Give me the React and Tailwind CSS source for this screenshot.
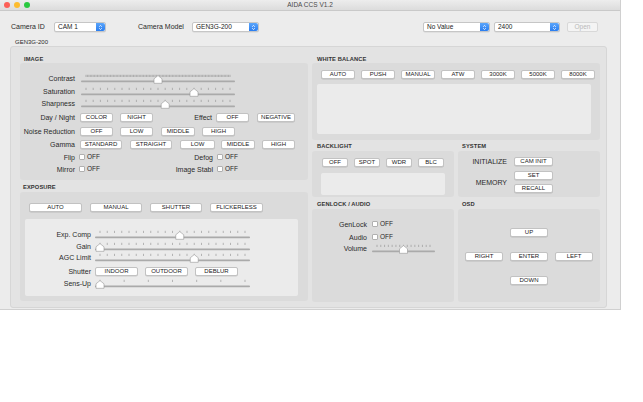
import React from 'react';

const Btn = ({ w, className = '', children }) => (
  <div className={`${w} ${className} h-[9px] shrink-0 rounded-[2px] border border-[#c2c2c2] bg-white text-center text-[6px] leading-[7px] text-[#222] shadow-[0_0.5px_0_rgba(0,0,0,0.14)]`}>
    {children}
  </div>
);

const Label = ({ w, children }) => (
  <div className={`${w} shrink-0 text-right text-[7px] leading-[9px] text-[#2a2a2a]`}>{children}</div>
);

const Check = ({ className = '' }) => (
  <div className={`${className} flex items-center`}>
    <div className="h-[6px] w-[6px] rounded-[1px] border border-[#b0b0b0] bg-white" />
    <span className="ml-[2px] text-[6.5px] text-[#2a2a2a]">OFF</span>
  </div>
);

const Title = ({ className = '', children }) => (
  <div className={`${className} shrink-0 text-[5.75px] font-bold tracking-[0.1px] text-[#333]`}>{children}</div>
);

function Slider({ w, ticks, value, className = '' }) {
  const r = 5;
  const xs = Array.from({ length: ticks }, (_, i) => r + (i * (w - 2 * r)) / (ticks - 1));
  const cx = r + value * (w - 2 * r);
  return (
    <svg width={w} height={11} className={`${className} block shrink-0`}>
      {xs.map((x, i) => (
        <line key={i} x1={x} x2={x} y1={1.8} y2={4} stroke="#8e8e8e" strokeWidth={0.6} />
      ))}
      <rect x={0} y={7.6} width={w} height={1.6} rx={0.8} fill="#aaaaaa" />
      <path
        d={`M${cx - 4} 10.3 V5.8 L${cx} 2.6 L${cx + 4} 5.8 V10.3 Z`}
        fill="#fff"
        stroke="#969696"
        strokeWidth={0.6}
        strokeLinejoin="round"
      />
    </svg>
  );
}

const Select = ({ w, className = '', children }) => (
  <div className={`${w} ${className} flex h-[10px] shrink-0 rounded-[2px] border border-[#c6c6c6] bg-white shadow-[0_0.5px_0_rgba(0,0,0,0.1)]`}>
    <div className="flex-1 pl-[3px] text-[6.5px] leading-[8px] text-[#222]">{children}</div>
    <div className="flex h-full w-[9px] items-center justify-center rounded-r-[2px] bg-gradient-to-b from-[#5aa5fb] to-[#2a7ef0]">
      <svg width="5" height="7" viewBox="0 0 5 7">
        <path d="M1.2 2.8 L2.5 1.4 L3.8 2.8 M1.2 4.2 L2.5 5.6 L3.8 4.2" fill="none" stroke="#fff" strokeWidth="0.8" />
      </svg>
    </div>
  </div>
);

function ImagePanel() {
  return (
    <div className="flex h-[117px] flex-col rounded-[3px] bg-[#dbdbdb] pt-[10px]">
      <div className="flex h-[11px] items-center">
        <Label w="w-[55px]">Contrast</Label>
        <Slider className="ml-[6px]" w={154} ticks={101} value={0.5} />
      </div>
      <div className="mt-[2px] flex h-[11px] items-center">
        <Label w="w-[55px]">Saturation</Label>
        <Slider className="ml-[6px]" w={154} ticks={21} value={0.75} />
      </div>
      <div className="mt-[1px] flex h-[11px] items-center">
        <Label w="w-[55px]">Sharpness</Label>
        <Slider className="ml-[6px]" w={154} ticks={21} value={0.55} />
      </div>
      <div className="mt-[4px] flex h-[9px] items-center">
        <Label w="w-[55px]">Day / Night</Label>
        <Btn w="w-[33px]" className="ml-[5px]">COLOR</Btn>
        <Btn w="w-[33px]" className="ml-[7px]">NIGHT</Btn>
        <Label w="w-[59px]">Effect</Label>
        <Btn w="w-[33px]" className="ml-[4px]">OFF</Btn>
        <Btn w="w-[38px]" className="ml-[8px]">NEGATIVE</Btn>
      </div>
      <div className="mt-[5px] flex h-[9px] items-center">
        <Label w="w-[55px]">Noise Reduction</Label>
        <Btn w="w-[33px]" className="ml-[5px]">OFF</Btn>
        <Btn w="w-[33px]" className="ml-[7px]">LOW</Btn>
        <Btn w="w-[34px]" className="ml-[8px]">MIDDLE</Btn>
        <Btn w="w-[33px]" className="ml-[7px]">HIGH</Btn>
      </div>
      <div className="mt-[4px] flex h-[9px] items-center">
        <Label w="w-[55px]">Gamma</Label>
        <Btn w="w-[42px]" className="ml-[5px]">STANDARD</Btn>
        <Btn w="w-[42px]" className="ml-[8px]">STRAIGHT</Btn>
        <Btn w="w-[35px]" className="ml-[8px]">LOW</Btn>
        <Btn w="w-[34px]" className="ml-[6px]">MIDDLE</Btn>
        <Btn w="w-[33px]" className="ml-[7px]">HIGH</Btn>
      </div>
      <div className="mt-[3px] flex h-[10px] items-center">
        <div className="flex w-[138px] items-center">
          <Label w="w-[55px]">Flip</Label>
          <Check className="ml-[4px]" />
        </div>
        <Label w="w-[55px]">Defog</Label>
        <Check className="ml-[4px]" />
      </div>
      <div className="mt-[2px] flex h-[10px] items-center">
        <div className="flex w-[138px] items-center">
          <Label w="w-[55px]">Mirror</Label>
          <Check className="ml-[4px]" />
        </div>
        <Label w="w-[55px]">Image Stabl</Label>
        <Check className="ml-[4px]" />
      </div>
    </div>
  );
}

function ExposurePanel() {
  return (
    <div className="flex h-[109px] flex-col rounded-[3px] bg-[#dbdbdb] pl-[5px] pt-[11px]">
      <div className="ml-[4px] flex h-[9px]">
        <Btn w="w-[53px]">AUTO</Btn>
        <Btn w="w-[52px]" className="ml-[8px]">MANUAL</Btn>
        <Btn w="w-[52px]" className="ml-[8px]">SHUTTER</Btn>
        <Btn w="w-[53px]" className="ml-[8px]">FLICKERLESS</Btn>
      </div>
      <div className="mt-[7px] flex h-[77px] w-[273px] flex-col rounded-[2px] bg-[#ebebeb] pt-[10px]">
        <div className="flex h-[11px] items-center">
          <Label w="w-[66px]">Exp. Comp</Label>
          <Slider className="ml-[4px]" w={155} ticks={21} value={0.55} />
        </div>
        <div className="mt-[1px] flex h-[11px] items-center">
          <Label w="w-[66px]">Gain</Label>
          <Slider className="ml-[4px]" w={155} ticks={21} value={0} />
        </div>
        <div className="flex h-[11px] items-center">
          <Label w="w-[66px]">AGC Limit</Label>
          <Slider className="ml-[4px]" w={155} ticks={21} value={0.65} />
        </div>
        <div className="mt-[4px] flex h-[9px] items-center">
          <Label w="w-[66px]">Shutter</Label>
          <Btn w="w-[43px]" className="ml-[4px]">INDOOR</Btn>
          <Btn w="w-[43px]" className="ml-[7px]">OUTDOOR</Btn>
          <Btn w="w-[43px]" className="ml-[7px]">DEBLUR</Btn>
        </div>
        <div className="mt-[2px] flex h-[11px] items-center">
          <Label w="w-[66px]">Sens-Up</Label>
          <Slider className="ml-[4px]" w={155} ticks={7} value={0} />
        </div>
      </div>
    </div>
  );
}

function RightColumn() {
  return (
    <div className="flex w-[288px] flex-col pt-[9px]">
      <Title className="h-[7px] pl-[5px] leading-[7px]">WHITE BALANCE</Title>
      <div className="flex h-[77px] flex-col rounded-[3px] bg-[#dbdbdb] pl-[5px] pt-[7px]">
        <div className="ml-[4px] flex h-[9px] gap-[6px]">
          {['AUTO', 'PUSH', 'MANUAL', 'ATW', '3000K', '5000K', '8000K'].map((t) => (
            <Btn key={t} w="w-[34px]">{t}</Btn>
          ))}
        </div>
        <div className="mt-[5px] h-[50px] w-[274px] rounded-[2px] bg-[#ebebeb]" />
      </div>

      <div className="mt-[3px] flex gap-[4px]">
        <div className="flex w-[142px] flex-col">
          <Title className="h-[8px] pl-[5px] leading-[7px]">BACKLIGHT</Title>
          <div className="flex h-[46px] flex-col rounded-[3px] bg-[#dbdbdb] pl-[9px] pt-[7px]">
            <div className="ml-[1px] flex h-[9px] gap-[6px]">
              {['OFF', 'SPOT', 'WDR', 'BLC'].map((t) => (
                <Btn key={t} w="w-[26px]">{t}</Btn>
              ))}
            </div>
            <div className="mt-[6px] h-[22px] w-[124px] rounded-[2px] bg-[#ebebeb]" />
          </div>
        </div>
        <div className="flex w-[142px] flex-col">
          <Title className="h-[8px] pl-[4px] leading-[7px]">SYSTEM</Title>
          <div className="flex h-[46px] flex-col rounded-[3px] bg-[#dbdbdb] pt-[6px]">
            <div className="flex h-[9px] items-center">
              <Label w="w-[49px]">INITIALIZE</Label>
              <Btn w="w-[39px]" className="ml-[7px]">CAM INIT</Btn>
            </div>
            <div className="mt-[5px] flex items-center">
              <Label w="w-[49px]">MEMORY</Label>
              <div className="ml-[7px] flex flex-col">
                <Btn w="w-[39px]">SET</Btn>
                <Btn w="w-[39px]" className="mt-[4px]">RECALL</Btn>
              </div>
            </div>
          </div>
        </div>
      </div>

      <div className="mt-[4px] flex gap-[4px]">
        <div className="flex w-[142px] flex-col">
          <Title className="h-[8px] pl-[5px] leading-[7px]">GENLOCK / AUDIO</Title>
          <div className="flex h-[93px] flex-col rounded-[3px] bg-[#dbdbdb] pt-[10px]">
            <div className="flex h-[10px] items-center">
              <Label w="w-[55px]">GenLock</Label>
              <Check className="ml-[5px]" />
            </div>
            <div className="mt-[3px] flex h-[10px] items-center">
              <Label w="w-[55px]">Audio</Label>
              <Check className="ml-[5px]" />
            </div>
            <div className="mt-[1px] flex h-[11px] items-center">
              <Label w="w-[55px]">Volume</Label>
              <Slider className="ml-[5px]" w={63} ticks={15} value={0.5} />
            </div>
          </div>
        </div>
        <div className="flex w-[142px] flex-col">
          <Title className="h-[8px] pl-[4px] leading-[7px]">OSD</Title>
          <div className="flex h-[93px] flex-col rounded-[3px] bg-[#dbdbdb] pl-[7px] pt-[19px]">
            <Btn w="w-[38px]" className="ml-[45px]">UP</Btn>
            <div className="mt-[15px] flex gap-[7px]">
              <Btn w="w-[38px]">RIGHT</Btn>
              <Btn w="w-[38px]">ENTER</Btn>
              <Btn w="w-[38px]">LEFT</Btn>
            </div>
            <Btn w="w-[38px]" className="ml-[45px] mt-[15px]">DOWN</Btn>
          </div>
        </div>
      </div>
    </div>
  );
}

export default function App() {
  return (
    <div className="h-[402px] w-[643px] overflow-hidden bg-white font-['Liberation_Sans','Arial',sans-serif]">
      <div className="flex h-[310px] w-[621px] flex-col border-r border-b border-[#d0d0d0] bg-[#ececec]">
        {/* title bar */}
        <div className="flex h-[11px] shrink-0 items-center border-b border-[#c9c9c9] bg-gradient-to-b from-[#ededed] to-[#dcdcdc]">
          <div className="flex w-[40px] items-center gap-[4px] pl-[4px]">
            <div className="h-[6px] w-[6px] rounded-full bg-[#fc5f57]" />
            <div className="h-[6px] w-[6px] rounded-full bg-[#fdbc2e]" />
            <div className="h-[6px] w-[6px] rounded-full bg-[#2ac840]" />
          </div>
          <div className="flex-1 text-center text-[6.5px] leading-[10px] text-[#4a4a4a]">AIDA CCS V1.2</div>
          <div className="w-[40px]" />
        </div>

        {/* camera row */}
        <div className="mt-[11px] flex h-[10px] items-center pl-[11px] text-[7px] text-[#2a2a2a]">
          <div className="w-[43px] shrink-0">Camera ID</div>
          <Select w="w-[52px]">CAM 1</Select>
          <div className="ml-[32px] w-[54px] shrink-0">Camera Model</div>
          <Select w="w-[67px]">GEN3G-200</Select>
          <Select w="w-[67px]" className="ml-[164px]">No Value</Select>
          <Select w="w-[66px]" className="ml-[4px]">2400</Select>
          <div className="ml-[7px] h-[10px] w-[31px] shrink-0 rounded-[2px] border border-[#d8d8d8] bg-[#f4f4f4] text-center text-[6.5px] leading-[8px] text-[#b9b9b9]">
            Open
          </div>
        </div>

        <div className="mt-[7px] h-[6px] pl-[15px] text-[6px] leading-[6px] text-[#2a2a2a]">GEN3G-200</div>

        {/* group box */}
        <div className="ml-[10px] mt-[1px] flex h-[262px] w-[597px] gap-[4px] rounded-[3px] border border-[#d6d6d6] bg-[#e3e3e3] pl-[9px] pr-[6px]">
          <div className="flex w-[288px] flex-col pt-[9px]">
            <Title className="h-[7px] pl-[4px] leading-[7px]">IMAGE</Title>
            <ImagePanel />
            <Title className="mt-[4px] h-[8px] pl-[3px] leading-[7px]">EXPOSURE</Title>
            <ExposurePanel />
          </div>
          <RightColumn />
        </div>
      </div>
    </div>
  );
}
